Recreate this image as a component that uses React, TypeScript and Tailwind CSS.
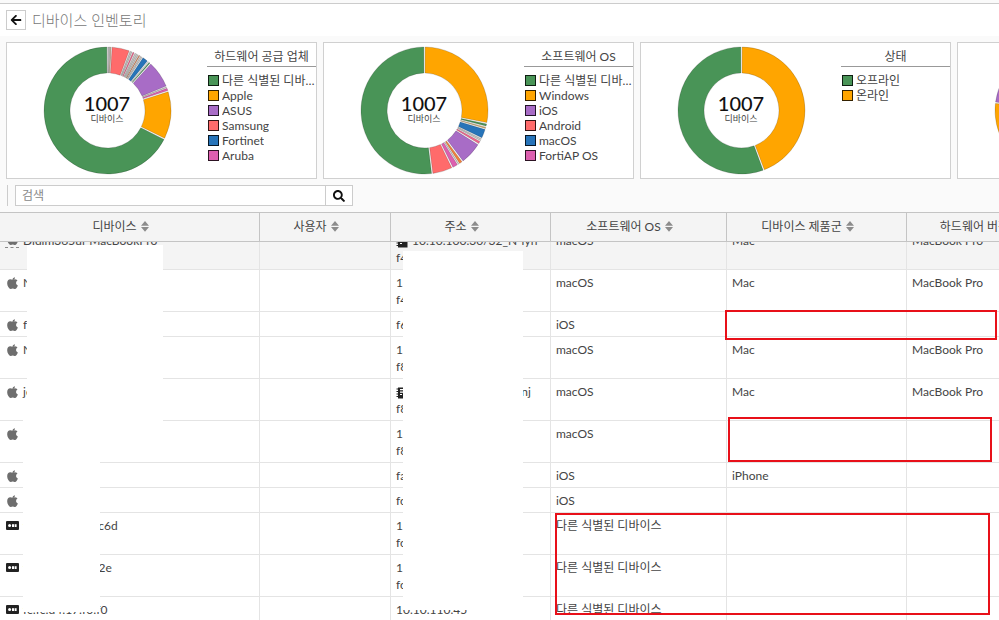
import React, { useLayoutEffect, useRef } from "react";
import { FaArrowLeft, FaSearch } from "react-icons/fa";

const GREEN = "#499457";
const ORANGE = "#ffa500";
const PURPLE = "#a86cc6";
const RED = "#ff6b6b";
const BLUE = "#2774b9";
const PINK = "#dd5faf";
const GRAY = "#d4d0cc";

interface Slice {
  from: number;
  to: number;
  color: string;
}

interface LegendItem {
  label: string;
  color: string;
}

interface ChartProps {
  title: string;
  slices: Slice[];
  legend: LegendItem[];
}

interface Device {
  icon: "apple" | "generic";
  name: string;
  address: string[];
  book?: boolean;
  os: string;
  family?: string;
  hardware?: string;
  active?: boolean;
}

const charts: ChartProps[] = [
  {
    title: "하드웨어 공급 업체",
    slices: [
      { from: 0, to: 1.2, color: GRAY },
      { from: 1.2, to: 2.4, color: GRAY },
      { from: 2.4, to: 3.6, color: "#d8b48c" },
      { from: 3.6, to: 20.5, color: RED },
      { from: 20.5, to: 21.8, color: GRAY },
      { from: 21.8, to: 23, color: GRAY },
      { from: 23, to: 25.4, color: "#f0648c" },
      { from: 25.4, to: 26.7, color: GRAY },
      { from: 26.7, to: 28, color: GRAY },
      { from: 28, to: 29.3, color: GRAY },
      { from: 29.3, to: 31, color: "#e08050" },
      { from: 31, to: 32.2, color: GRAY },
      { from: 32.2, to: 33.4, color: GRAY },
      { from: 33.4, to: 39.4, color: BLUE },
      { from: 39.4, to: 40.4, color: "#ffffff" },
      { from: 40.4, to: 42.4, color: GREEN },
      { from: 42.4, to: 68, color: PURPLE },
      { from: 68, to: 69, color: GRAY },
      { from: 69, to: 72.3, color: PINK },
      { from: 72.3, to: 116.5, color: ORANGE },
      { from: 116.5, to: 360, color: GREEN },
    ],
    legend: [
      { label: "다른 식별된 디바이스", color: GREEN },
      { label: "Apple", color: ORANGE },
      { label: "ASUS", color: PURPLE },
      { label: "Samsung", color: RED },
      { label: "Fortinet", color: BLUE },
      { label: "Aruba", color: PINK },
    ],
  },
  {
    title: "소프트웨어 OS",
    slices: [
      { from: 0, to: 101.6, color: ORANGE },
      { from: 101.6, to: 104.8, color: GREEN },
      { from: 104.8, to: 106.9, color: "#d8b070" },
      { from: 106.9, to: 116, color: BLUE },
      { from: 116, to: 117.3, color: GRAY },
      { from: 117.3, to: 118.6, color: GRAY },
      { from: 118.6, to: 122, color: "#f0648c" },
      { from: 122, to: 143.2, color: PURPLE },
      { from: 143.2, to: 147, color: "#f0803c" },
      { from: 147, to: 148.2, color: GRAY },
      { from: 148.2, to: 154, color: PINK },
      { from: 154, to: 173, color: RED },
      { from: 173, to: 360, color: GREEN },
    ],
    legend: [
      { label: "다른 식별된 디바이스", color: GREEN },
      { label: "Windows", color: ORANGE },
      { label: "iOS", color: PURPLE },
      { label: "Android", color: RED },
      { label: "macOS", color: BLUE },
      { label: "FortiAP OS", color: PINK },
    ],
  },
  {
    title: "상태",
    slices: [
      { from: 0, to: 159.5, color: ORANGE },
      { from: 159.5, to: 360, color: GREEN },
    ],
    legend: [
      { label: "오프라인", color: GREEN },
      { label: "온라인", color: ORANGE },
    ],
  },
  {
    title: "인터페이스",
    slices: [
      { from: 0, to: 200, color: GREEN },
      { from: 200, to: 277, color: ORANGE },
      { from: 277, to: 360, color: PURPLE },
    ],
    legend: [],
  },
];

const columns = [
  { label: "디바이스", width: "w-[260px]" },
  { label: "사용자", width: "w-[131px]" },
  { label: "주소", width: "w-[160px]" },
  { label: "소프트웨어 OS", width: "w-[176px]" },
  { label: "디바이스 제품군", width: "w-[180px]" },
  { label: "하드웨어 버전", width: "w-[166px]" },
];

const devices: Device[] = [
  { icon: "apple", name: "Didim365ui-MacBookPro", address: ["10.10.100.30/32_N-lyh", "f4:"], book: true, os: "macOS", family: "Mac", hardware: "MacBook Pro", active: true },
  { icon: "apple", name: "N", address: ["1", "f4:"], os: "macOS", family: "Mac", hardware: "MacBook Pro" },
  { icon: "apple", name: "f", address: ["f6:"], os: "iOS" },
  { icon: "apple", name: "N", address: ["1", "f8:"], os: "macOS", family: "Mac", hardware: "MacBook Pro" },
  { icon: "apple", name: "je", address: ["10.10.100.3/32_N-hnj", "f8:"], book: true, os: "macOS", family: "Mac", hardware: "MacBook Pro" },
  { icon: "apple", name: "", address: ["1", "f8:"], os: "macOS" },
  { icon: "apple", name: "", address: ["fa:"], os: "iOS", family: "iPhone" },
  { icon: "apple", name: "", address: ["fc:"], os: "iOS" },
  { icon: "generic", name: "fc:fe:c4:d4:17:c6d", address: ["1", "fc:"], os: "다른 식별된 디바이스" },
  { icon: "generic", name: "fc:fe:c4:04:17:2e", address: ["1", "fc:"], os: "다른 식별된 디바이스" },
  { icon: "generic", name: "fc:fc:d4:17:f0:f0", address: ["10.10.110.45", "fc:"], os: "다른 식별된 디바이스" },
];

const point = (angle: number, radius: number) => {
  const rad = ((angle - 90) * Math.PI) / 180;
  return `${(64.5 + radius * Math.cos(rad)).toFixed(2)} ${(64.5 + radius * Math.sin(rad)).toFixed(2)}`;
};

const slicePath = ({ from, to }: Slice) => {
  const large = to - from > 180 ? 1 : 0;
  const outer = Math.min(0.6, (to - from) / 4);
  const inner = Math.min(0.9, (to - from) / 4);
  return `M${point(from + outer, 63.5)} A63.5 63.5 0 ${large} 1 ${point(to - outer, 63.5)} L${point(to - inner, 37.5)} A37.5 37.5 0 ${large} 0 ${point(from + inner, 37.5)} Z`;
};

const ChartCard: React.FC<ChartProps> = ({ title, slices, legend }) => {
  return (
    <section className="flex h-[137px] w-[311px] shrink-0 overflow-hidden border border-[#d0d0d0] bg-white">
      <div className="grid w-[200px] place-items-center">
        <svg viewBox="0 0 129 129" className="col-start-1 row-start-1 size-[129px]">
          {slices.map((slice) => (
            <path key={slice.from} d={slicePath(slice)} fill={slice.color} stroke="#000" strokeOpacity="0.28" strokeWidth="0.6" />
          ))}
        </svg>
        <div className="col-start-1 row-start-1 flex flex-col items-center pb-1">
          <span className="text-[20px] font-medium leading-5 text-[#111]">1007</span>
          <span className="text-[9px] leading-3">디바이스</span>
        </div>
      </div>
      <div className="min-w-0 flex-1">
        <h2 className="mb-1.5 border-b border-[#999] pt-1 text-center text-[12px] leading-[19px]">{title}</h2>
        <ul className="px-px leading-[15px]">
          {legend.map((item) => (
            <li key={item.label} className="flex items-center gap-[3px]">
              <span className="size-[11px] shrink-0 border border-black/80" style={{ backgroundColor: item.color }} />
              <span className="truncate">{item.label}</span>
            </li>
          ))}
        </ul>
      </div>
    </section>
  );
};

const SortIcon = () => (
  <svg viewBox="0 0 8 11" className="h-[11px] w-2 shrink-0" fill="#8c8c8c">
    <path d="M4 0 L8 4.8 H0 Z M0 6 H8 L4 10.8 Z" />
  </svg>
);

const AppleIcon = () => (
  <svg viewBox="108 -20 1404 1570" className="h-3 w-[11px]" fill="#6e6e6e">
    <path d="M1507 1100q-39 124-123 250-129 196-257 196-49 0-140-32-86-32-151-32-61 0-142 33-81 34-132 34-152 0-301-259-147-261-147-503 0-228 113-374 113-144 284-144 72 0 177 30 104 30 138 30 45 0 143-34 102-34 173-34 119 0 213 65 52 36 104 100-79 67-114 118-65 94-65 207 0 124 69 223t158 126z" />
    <path d="M1130 42q0 61-29 136-30 75-93 138-54 54-108 72-37 11-104 17 3-149 78-257 74-107 250-148 6 21 6 42z" />
  </svg>
);

const GenericIcon = () => (
  <svg viewBox="0 0 13 9" className="h-[9px] w-[13px]">
    <rect width="13" height="9" rx="1" fill="#222" />
    <circle cx="3.6" cy="4.6" r="1.5" fill="#fff" />
    <rect x="6" y="3.2" width="2" height="2.8" fill="#fff" />
    <rect x="8.6" y="3.2" width="2" height="2.8" fill="#fff" />
  </svg>
);

const BookIcon = () => (
  <svg viewBox="0 0 12 12" className="mr-1 inline h-3 w-3" fill="#222">
    <path d="M2 0.5 H11.5 V11.5 H2 V10 H0.5 V9 H2 V7.5 H0.5 V6.5 H2 V5 H0.5 V4 H2 V2.5 H0.5 V1.5 H2 Z" />
    <path d="M4 2 H10 V3.2 H4 Z M4 4.6 H8 V5.8 H4 Z M4 7 H6 V8 H4 Z" fill="#fff" />
  </svg>
);

const DeviceRow: React.FC<{ device: Device }> = ({ device }) => {
  const cell = "overflow-hidden whitespace-nowrap border-b border-r border-[#e4e4e4] px-[5px] pb-[3px] pt-1 align-top";
  return (
    <tr className={device.active ? "bg-[#f4f4f4]" : "bg-white"}>
      <td className={cell}>
        <span className="flex h-[17px] items-center gap-1">
          <span className={`flex w-[14px] shrink-0 justify-center ${device.active ? "border-b border-dashed border-[#888] pb-0.5" : ""}`}>
            {device.icon === "apple" ? <AppleIcon /> : <GenericIcon />}
          </span>
          <span>{device.name}</span>
        </span>
      </td>
      <td className={cell} />
      <td className={cell}>
        {device.address.map((line, index) => (
          <div key={line} className="h-[17px]">
            {device.book && index === 0 && <BookIcon />}
            {line}
          </div>
        ))}
      </td>
      <td className={cell}>{device.os}</td>
      <td className={cell}>{device.family}</td>
      <td className={cell}>{device.hardware}</td>
    </tr>
  );
};

const App: React.FC = () => {
  const list = useRef<HTMLDivElement>(null);

  useLayoutEffect(() => {
    if (list.current) list.current.scrollTop = 14;
  }, []);

  return (
    <div className="flex h-screen flex-col overflow-hidden bg-[#fafafa] pt-[3px] font-['Lato','Noto_Sans_CJK_KR',sans-serif] text-[12px] text-[#444]">
      <header className="flex h-[33px] shrink-0 items-center gap-1.5 border-t border-[#ccc] bg-white px-1.5">
        <button type="button" aria-label="뒤로" className="grid size-5 place-items-center border border-[#ccc] bg-white">
          <FaArrowLeft size={12} color="#111" />
        </button>
        <h1 className="text-[15px] font-light text-[#777]">디바이스 인벤토리</h1>
      </header>

      {/* 요약 차트 */}
      <div className="flex shrink-0 gap-1.5 overflow-hidden p-1.5">
        {charts.map((chart) => (
          <ChartCard key={chart.title} {...chart} />
        ))}
      </div>

      {/* 검색 */}
      <div className="flex shrink-0 px-[7px] pb-1.5">
        <form className="flex h-[21px] border-l border-[#ccc] pl-[7px]">
          <input type="search" aria-label="검색" placeholder="검색" className="w-[311px] border border-[#ccc] bg-white px-1.5 outline-none placeholder:text-[#888]" />
          <button type="button" aria-label="찾기" className="grid w-[27px] place-items-center border border-l-0 border-[#ccc] bg-white">
            <FaSearch size={12} color="#111" />
          </button>
        </form>
      </div>

      {/* 디바이스 목록 */}
      <div className="relative min-h-0 flex-1">
        <div ref={list} className="h-full overflow-hidden">
          <table className="w-[1073px] table-fixed border-separate border-spacing-0 leading-[17px]">
            <thead>
              <tr>
                {columns.map((column) => (
                  <th key={column.label} scope="col" className={`sticky top-0 z-10 h-[30px] border-y border-r border-[#c4c4c4] bg-[#f4f4f4] pb-0.5 pr-[18px] font-normal ${column.width}`}>
                    <span className="flex items-center justify-center gap-1">
                      {column.label}
                      <SortIcon />
                    </span>
                  </th>
                ))}
              </tr>
            </thead>
            <tbody>
              {devices.map((device, index) => (
                <DeviceRow key={index} device={device} />
              ))}
            </tbody>
          </table>
        </div>

        {/* 가림 영역 */}
        <div className="absolute left-[27px] top-[33px] h-[177px] w-[136px] bg-white" />
        <div className="absolute left-[23px] top-[202px] h-[198px] w-[77px] bg-white" />
        <div className="absolute left-[403px] top-[39px] h-[359px] w-[120px] bg-white" />

        {/* 강조 표시 */}
        <div className="absolute left-[725px] top-[98px] h-[30px] w-[272px] border-2 border-[#e81019]" />
        <div className="absolute left-[728px] top-[205px] h-[45px] w-[264px] border-2 border-[#e81019]" />
        <div className="absolute left-[555px] top-[301px] h-[102px] w-[435px] border-2 border-[#e81019]" />
      </div>
    </div>
  );
};

export default App;
